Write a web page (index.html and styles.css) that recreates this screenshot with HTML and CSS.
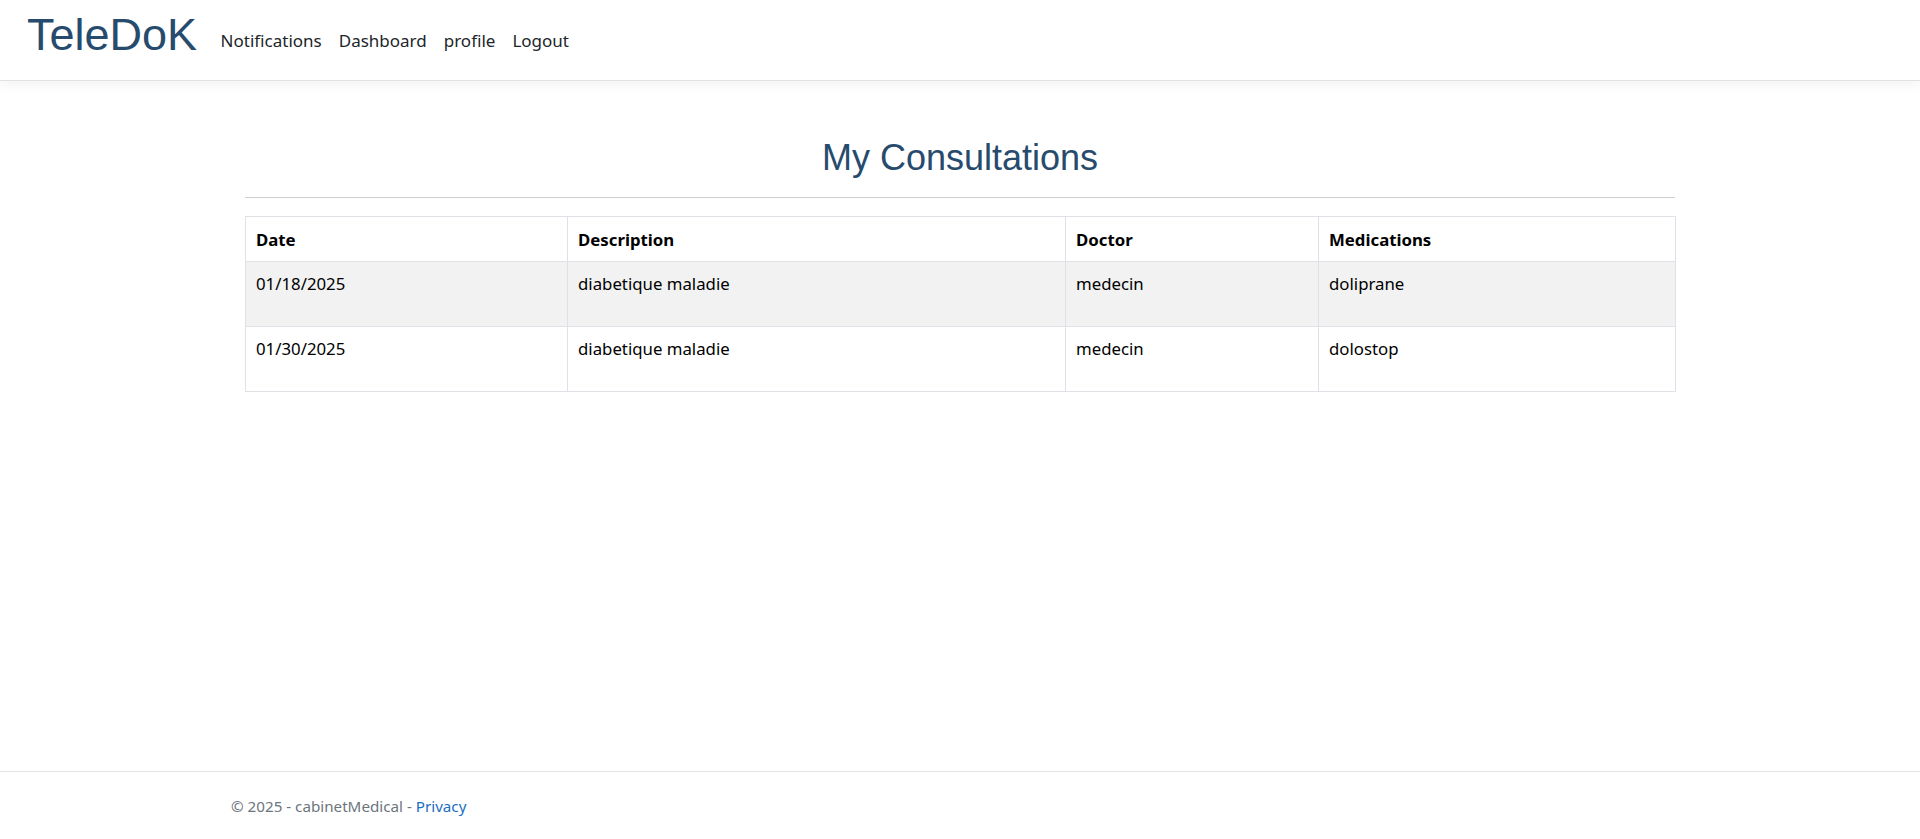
FILE: index.html
```html
<!DOCTYPE html>
<html lang="en">
<head>
<meta charset="utf-8">
<title>TeleDoK - My Consultations</title>
<link rel="stylesheet" href="styles.css">
</head>
<body>
<div class="page">
  <header class="topbar">
    <nav class="navbar">
      <a class="brand" href="#">TeleDoK</a>
      <ul class="nav">
        <li><a class="nav-link" href="#">Notifications</a></li>
        <li><a class="nav-link" href="#">Dashboard</a></li>
        <li><a class="nav-link" href="#">profile</a></li>
        <li><a class="nav-link" href="#">Logout</a></li>
      </ul>
    </nav>
  </header>

  <main class="main">
    <div class="container">
      <h2 class="title">My Consultations</h2>
      <hr class="rule">
      <table class="table">
        <colgroup>
          <col class="c-date">
          <col class="c-desc">
          <col class="c-doc">
          <col class="c-med">
        </colgroup>
        <thead>
          <tr>
            <th>Date</th>
            <th>Description</th>
            <th>Doctor</th>
            <th>Medications</th>
          </tr>
        </thead>
        <tbody>
          <tr class="odd">
            <td>01/18/2025</td>
            <td>diabetique maladie</td>
            <td>medecin</td>
            <td>doliprane</td>
          </tr>
          <tr>
            <td>01/30/2025</td>
            <td>diabetique maladie</td>
            <td>medecin</td>
            <td>dolostop</td>
          </tr>
        </tbody>
      </table>
    </div>
  </main>

  <footer class="footer">
    <div class="footer-inner">&copy; 2025 - cabinetMedical - <a class="footer-link" href="#">Privacy</a></div>
  </footer>
</div>
</body>
</html>
```

FILE: styles.css
```css
* { box-sizing: border-box; }

html, body {
  margin: 0;
  padding: 0;
  height: 100%;
}

body {
  font-family: "Noto Sans", "Open Sans", "Liberation Sans", sans-serif;
  font-size: 16px;
  color: #212529;
  background: #ffffff;
}

.page {
  min-height: 100vh;
  display: flex;
  flex-direction: column;
}

.topbar {
  height: 81px;
  border-bottom: 1px solid #e2e2e2;
  box-shadow: 0 4px 12px rgba(0, 0, 0, 0.05);
  background: #fff;
}

.navbar {
  height: 100%;
  display: flex;
  align-items: center;
  padding-left: 27px;
}

.brand {
  font-family: "Liberation Sans", Arial, sans-serif;
  font-size: 45px;
  color: #274b6d;
  text-decoration: none;
  margin-right: 15px;
  line-height: 1;
  position: relative;
  top: -6px;
}

.nav {
  list-style: none;
  margin: 0;
  padding: 0;
  display: flex;
}

.nav-link {
  display: block;
  padding: 8px 8.5px;
  font-size: 17px;
  color: #212529;
  text-decoration: none;
}

.main {
  flex: 1;
}

.container {
  width: 1430px;
  margin: 0 auto;
  padding-top: 55px;
}

.title {
  font-family: "Liberation Sans", Arial, sans-serif;
  font-weight: 400;
  font-size: 36px;
  line-height: 43px;
  color: #274b6d;
  text-align: center;
  margin: 0 0 18px;
}

.rule {
  border: 0;
  border-top: 1px solid #cfcfcf;
  margin: 0 0 18px;
}

.table {
  width: 100%;
  border-collapse: collapse;
  table-layout: fixed;
  border: 1px solid #dee2e6;
}

.c-date { width: 322px; }
.c-desc { width: 498px; }
.c-doc { width: 253px; }
.c-med { width: 357px; }

.table th,
.table td {
  border: 1px solid #dee2e6;
  text-align: left;
  vertical-align: top;
  color: #000;
  font-size: 16.8px;
}

.table th {
  font-weight: 700;
  padding: 11px 10px 9px;
  line-height: 24px;
}

.table td {
  padding: 10px 10px 30px;
  line-height: 24px;
}

.table tr.odd td {
  background: #f2f2f2;
}

.footer {
  border-top: 1px solid #e2e2e2;
  height: 68px;
}

.footer-inner {
  padding-left: 231px;
  line-height: 68px;
  font-size: 15.2px;
  color: #6c757d;
  white-space: nowrap;
}

.footer-link {
  color: #1b6ec2;
  text-decoration: none;
}
```
